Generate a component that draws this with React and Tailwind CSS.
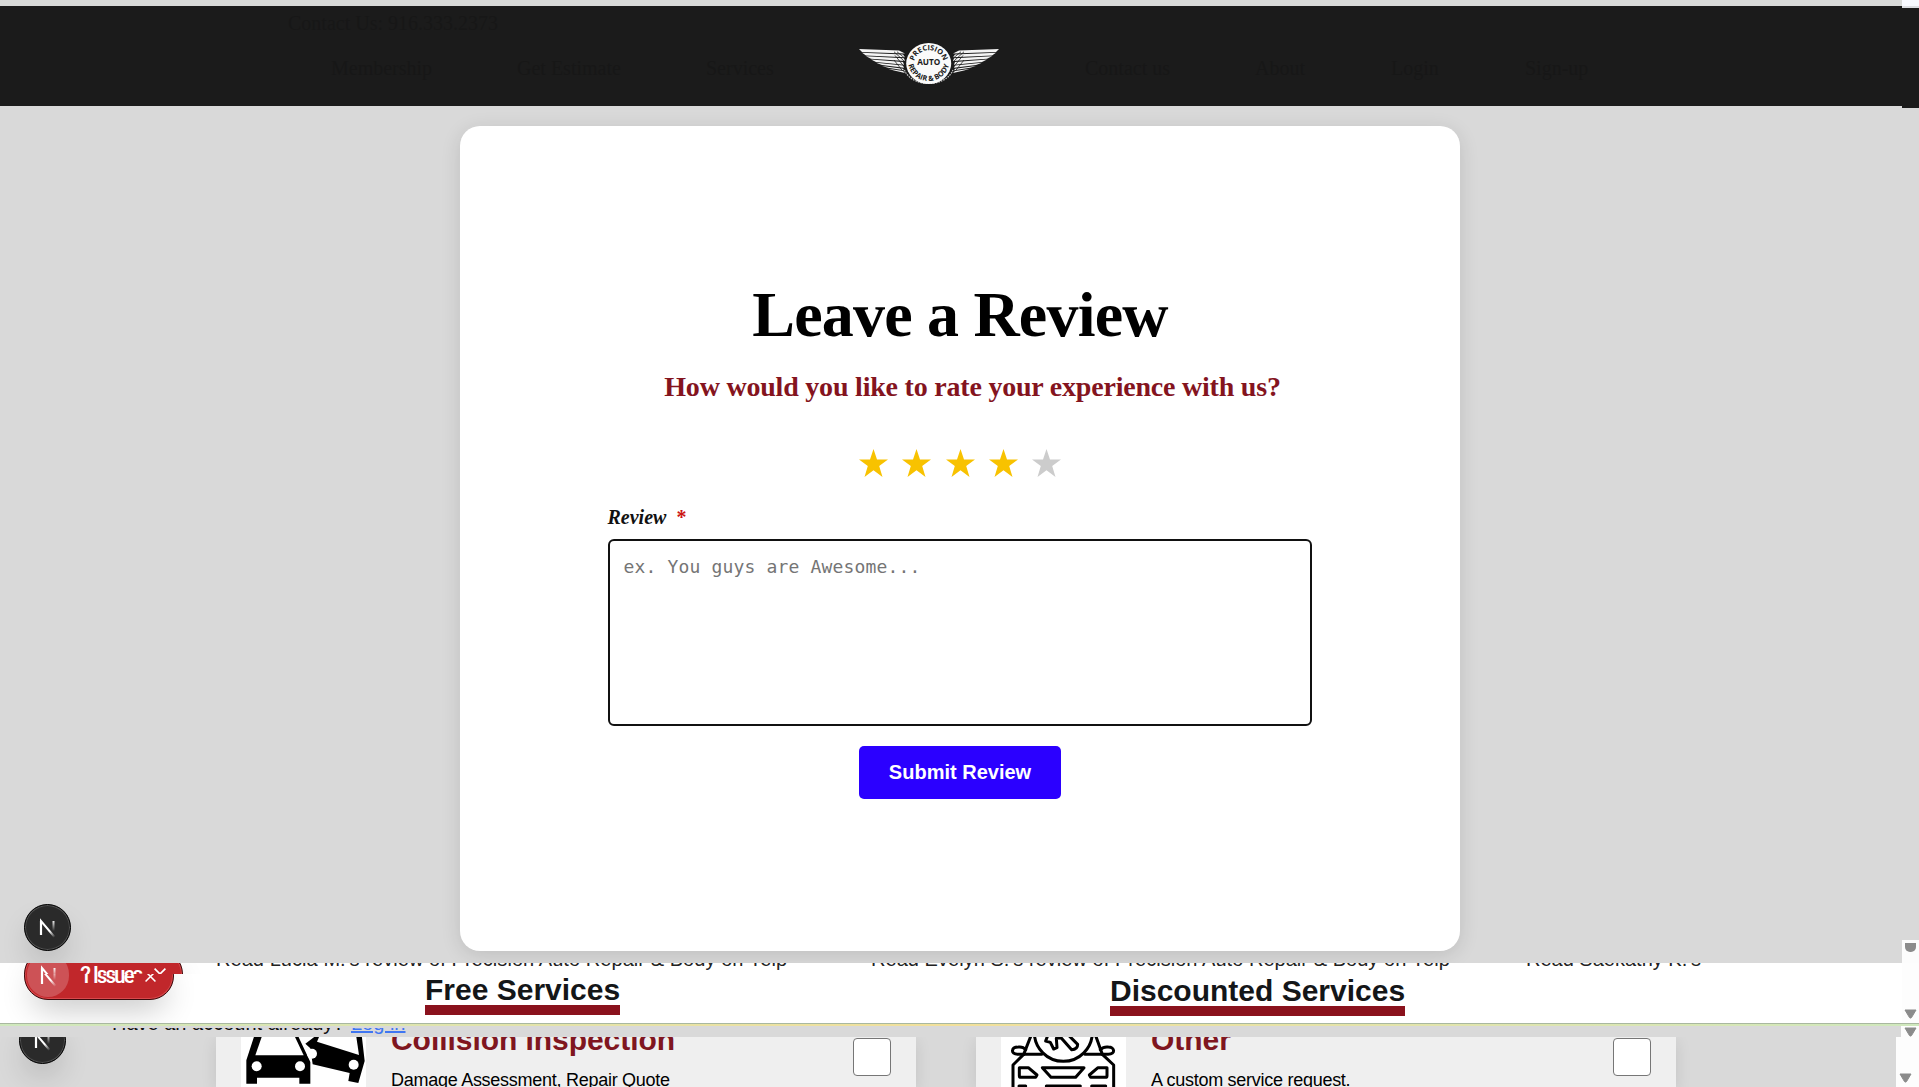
const leftNav = [
  { label: "Membership", cls: "ml-[331px] w-[186px]" },
  { label: "Get Estimate", cls: "w-[189px]" },
  { label: "Services", cls: "w-[153px]" },
];

const rightNav = [
  { label: "Contact us", cls: "ml-[86px] w-[170px]" },
  { label: "About", cls: "w-[136px]" },
  { label: "Login", cls: "w-[134px]" },
  { label: "Sign-up", cls: "w-[80px]" },
];

function Wing() {
  const feathers = [
    "M0 0 L40 1.500 L46 5 L3 3.200 Z",
    "M3 4 L44 6 L46 9 L7 7 Z",
    "M7 8 L45 10 L46 13 L12 10.500 Z",
    "M12 11.500 L44 14 L45 17 L17 14 Z",
    "M17 15 L44 18 L45 20.500 L23 17.500 Z",
    "M23 18.500 L44 21.500 L45 23 L29 20.500 Z",
    "M29 21.500 L44 23.800 L46 26 L35 23.500 Z",
  ];
  return (
    <g>
      {feathers.map((d) => (
        <path key={d} d={d} fill="#f4f4f4" />
      ))}
      <path d="M35 3L46 14M38 3L47 11M36 7L45 19M35 12L43 23" stroke="#1b1b1b" strokeWidth="0.8" />
    </g>
  );
}

function Logo() {
  return (
    <svg className="h-[46px] w-[140px] shrink-0" viewBox="0 0 140 46">
      <g transform="translate(0 7) scale(1 0.920)">
        <Wing />
      </g>
      <g transform="translate(140 7) scale(-1 0.920)">
        <Wing />
      </g>
      <ellipse cx="69.700" cy="22" rx="24.200" ry="21.500" fill="#1b1b1b" />
      <path d="M45.500 28a25 18 0 0 0 48.400 0" fill="none" stroke="#c4c4c4" strokeWidth="1.200" strokeDasharray="1.600 1" />
      <ellipse cx="69.700" cy="21.500" rx="22.500" ry="20.500" fill="#fafafa" />
      <defs>
        <path id="arcTop" d="M54.900 22a14.800 13.800 0 0 1 29.600 0" />
        <path id="arcBottom" d="M49 19a20.700 20 0 0 0 41.400 0" />
      </defs>
      <g className="font-['Open_Sans',sans-serif] font-bold" fill="#1b1b1b" textAnchor="middle">
        <text fontSize="7.300">
          <textPath href="#arcTop" startOffset="50%">PRECISION</textPath>
        </text>
        <text fontSize="7.300">
          <textPath href="#arcBottom" startOffset="50%">REPAIR &amp; BODY</textPath>
        </text>
        <text x="69.700" y="23.300" fontSize="8.200">AUTO</text>
      </g>
    </svg>
  );
}

function NextGlyph({ id }) {
  return (
    <svg className="h-[47px] w-[47px] shrink-0" viewBox="0 0 47 47" fill="none">
      <defs>
        <linearGradient id={`${id}d`} x1="24" y1="24" x2="31" y2="33" gradientUnits="userSpaceOnUse">
          <stop offset="0.300" stopColor="#fff" />
          <stop offset="1" stopColor="#fff" stopOpacity="0" />
        </linearGradient>
        <linearGradient id={`${id}v`} x1="0" y1="16" x2="0" y2="27" gradientUnits="userSpaceOnUse">
          <stop stopColor="#fff" />
          <stop offset="1" stopColor="#fff" stopOpacity="0" />
        </linearGradient>
      </defs>
      <path d="M17 31V17L30.500 33" stroke={`url(#${id}d)`} strokeWidth="2" />
      <path d="M17 31V17" stroke="#fff" strokeWidth="2.200" />
      <rect x="28.500" y="17" width="2" height="11" fill={`url(#${id}v)`} />
    </svg>
  );
}

function NextBadge({ id }) {
  return (
    <div className="h-[47px] w-[47px] rounded-full border border-black bg-[#2a2a2a] shadow-[inset_0_0_0_1px_#505050,0_16px_32px_-8px_rgba(0,0,0,0.24)]">
      <div className="-m-px">
        <NextGlyph id={id} />
      </div>
    </div>
  );
}

function IssuePill({ id, label, wide }) {
  return (
    <div
      className={
        "flex h-12 items-center rounded-full border border-[#3c0a0c] bg-[#c1272b] text-white shadow-[inset_0_0_0_1px_#d8494d,0_16px_32px_-8px_rgba(0,0,0,0.24)] " +
        (wide ? "w-[159px]" : "w-[150px]")
      }
    >
      <div className="ml-[2px] flex h-[42px] w-[42px] items-center justify-center rounded-full bg-[#cd5256]">
        <NextGlyph id={id} />
      </div>
      <span
        className={
          "ml-[11px] shrink-0 font-['Roboto',sans-serif] text-[20px] leading-none font-semibold tracking-[-1.700px] whitespace-pre " +
          (wide ? "w-[66px]" : "w-[54px]")
        }
      >
        {label}
      </span>
      <svg className={"shrink-0 " + (wide ? "ml-[8px] h-[12px] w-[12px]" : "ml-[11px] h-[11px] w-[11px]")} viewBox="0 0 10 10">
        <path d="M0.500 0.500L9.500 9.500M9.500 0.500L0.500 9.500" stroke="#fff" strokeWidth="1.400" />
      </svg>
    </div>
  );
}

function Arrow() {
  return (
    <svg className="h-[10px] w-[13px] shrink-0" viewBox="0 0 13 10">
      <path d="M1 1H12L7.500 8.600Q6.500 9.600 5.500 8.600Z" fill="#8b8b8b" stroke="#8b8b8b" strokeLinejoin="round" />
    </svg>
  );
}

function CarsIcon() {
  return (
    <svg className="h-[50px] w-[125px]" viewBox="0 0 375 150">
      <path d="M42 -10L16 70V140H48V122H175V140H208V75L168 -10Z" fill="#000" />
      <path d="M62 0L43 55H188L162 0Z" fill="#fff" />
      <circle cx="47" cy="88" r="15" fill="#fff" />
      <circle cx="177" cy="88" r="15" fill="#fff" />
      <path d="M225 -4L193 20L208 34L215 82L326 108L322 132L352 138L371 72L362 -6Z" fill="#000" />
      <path d="M234 0L228 14L354 54L346 0Z" fill="#fff" />
      <circle cx="213" cy="50" r="15" fill="#fff" />
      <circle cx="338" cy="83" r="15" fill="#fff" />
    </svg>
  );
}

function ServiceIcon() {
  return (
    <svg className="h-[50px] w-[125px]" viewBox="0 0 375 150" fill="none" stroke="#000" strokeWidth="9" strokeLinejoin="round" strokeLinecap="round">
      <path d="M90 -4L68 52M284 -4L304 52" />
      <path d="M68 52H50C28 52 30 30 52 30Q66 28 74 38M304 52H322C344 52 342 30 322 30Q308 28 298 38" />
      <path d="M68 52H122M252 52H304M68 52L36 84V150M304 52L338 84V150" />
      <circle cx="187" cy="-14" r="87" />
      <path d="M140 -4L134 12L148 16L158 36L168 32L166 4L180 2L212 38Q230 38 230 22L204 -4" />
      <path d="M55 92H82L108 114L104 121H60Q55 121 55 116ZM318 92H291L265 114L269 121H313Q318 121 318 116Z" />
      <path d="M124 92H249L224 121H150Z" />
      <path d="M54 147H74M136 147H238M272 147H314" />
    </svg>
  );
}

function ServiceCard({ title, text, icon }) {
  return (
    <div className="flex h-[50px] w-[700px] shrink-0 bg-[#efefef] shadow-[0_4px_16px_rgba(0,0,0,0.1)]">
      <div className="ml-[25px] h-[50px] w-[125px] shrink-0 bg-white">{icon}</div>
      <div className="ml-[25px] flex h-[50px] w-[462px] shrink-0 flex-col overflow-hidden font-['Liberation_Sans',sans-serif]">
        <h3 className="-mt-[12px] text-[30px] leading-[30px] font-bold tracking-[-0.05px] text-[#7f1620]">{title}</h3>
        <p className="mt-[15px] text-[18px] leading-5 tracking-[-0.270px] whitespace-nowrap text-black">{text}</p>
      </div>
      <div className="mt-[1px] h-[38px] w-[38px] shrink-0 rounded-[4px] border border-[#767676] bg-white" />
    </div>
  );
}

function Star({ on }) {
  return (
    <svg className="h-7 w-[29px]" viewBox="0 0 29 28">
      <path d="M14.500 0L18 10.500H29L20.200 17L23.500 28L14.500 21.300L5.500 28L8.800 17L0 10.500H11Z" fill={on ? "#f8c200" : "#cccccc"} />
    </svg>
  );
}

export default function App() {
  return (
    <div className="relative flex h-[1087px] w-[1919px] flex-col overflow-hidden bg-[#d9d9d9] font-['Liberation_Serif',serif]">
      <div className="flex h-[106px] shrink-0">
        <div className="w-[1902px]">
          <div className="h-[6px] bg-[#d8dad8]" />
          <header className="flex h-[100px] flex-col bg-[#1b1b1b] text-[#171717]">
            <p className="mt-[4px] ml-[288px] h-[24px] text-[20px] leading-[26px]">Contact Us: 916.333.2373</p>
            <div className="flex text-[20px] leading-[26px]">
              <nav className="mt-[21px] flex">
                {leftNav.map((n) => (
                  <a key={n.label} className={n.cls}>{n.label}</a>
                ))}
              </nav>
              <div className="mt-[8px]">
                <Logo />
              </div>
              <nav className="mt-[21px] flex">
                {rightNav.map((n) => (
                  <a key={n.label} className={n.cls}>{n.label}</a>
                ))}
              </nav>
            </div>
          </header>
        </div>
        <div className="h-[108px] w-[17px] bg-[#1b1b1b]">
          <div className="h-[6px] bg-[#f8faff]" />
          <div className="h-[2px] bg-[#dcdee2]" />
        </div>
      </div>

      <main className="relative flex h-[857px] shrink-0 justify-center overflow-hidden">
        <section className="mt-5 flex h-[825px] w-[1000px] flex-col items-center rounded-[20px] bg-white shadow-[0_4px_20px_rgba(0,0,0,0.12)]">
          <h1 className="mt-[157px] ml-px text-[64px] leading-[64px] font-bold tracking-[-0.800px] text-black">Leave a Review</h1>
          <h2 className="mt-[26px] ml-[26px] text-[28px] leading-7 font-bold tracking-[-0.210px] whitespace-nowrap text-[#84141e]">
            How would you like to rate your experience with us?
          </h2>
          <div className="mt-[48px] ml-px flex gap-[14.400px]">
            {[1, 2, 3, 4, 5].map((n) => (
              <Star key={n} on={n < 5} />
            ))}
          </div>
          <form className="flex w-[704px] flex-col items-center">
            <label className="mt-[30px] flex h-[24px] w-full text-[20px] leading-5 font-bold text-[#111]">
              <i>Review</i>
              <span className="ml-[10px] text-[#cc1414]">*</span>
            </label>
            <textarea
              className="mt-[8px] block h-[187px] w-full resize-none rounded-[6px] border-2 border-[#111] bg-white px-[14px] py-[14px] font-['DejaVu_Sans_Mono',monospace] text-[18px] leading-6 tracking-[0.160px] placeholder:text-[#757575]"
              placeholder="ex. You guys are Awesome..."
            />
            <button type="button" className="mt-5 h-[53px] w-[202px] rounded-[5px] bg-[#2b00ff] pb-[2px] pl-px font-['Liberation_Sans',sans-serif] text-[20px] font-bold text-white">
              Submit Review
            </button>
          </form>
        </section>
        <div className="absolute top-[798px] left-6">
          <NextBadge id="a" />
        </div>
        <div className="absolute right-0 bottom-0 h-[23px] w-[17px] bg-[#fcfcfc]">
          <div className="mt-[3px] ml-[3px] h-[9px] w-[11px] rounded-b-[5px] bg-[#8b8b8b]" />
        </div>
      </main>

      <section className="relative flex h-[60px] shrink-0 overflow-hidden bg-white font-['Liberation_Sans',sans-serif]">
        <div className="w-[1902px] shrink-0">
          <div className="flex h-[10px] overflow-hidden text-[20px] leading-5 whitespace-nowrap text-[#222]">
            <p className="-mt-[14px] ml-[216px] w-[655px] shrink-0 tracking-[0.060px]">Read Lucia M.'s review of Precision Auto Repair &amp; Body on Yelp</p>
            <p className="-mt-[14px] w-[655px] shrink-0 tracking-[0.040px]">Read Evelyn S.'s review of Precision Auto Repair &amp; Body on Yelp</p>
            <p className="-mt-[14px] shrink-0">Read Saekathy K.'s</p>
          </div>
          <div className="flex items-start text-[30px] leading-[30px] font-bold whitespace-nowrap text-[#141618]">
            <h2 className="mt-[2px] ml-[425px] w-[195px] border-b-10 border-[#8a121d]">Free Services</h2>
            <h2 className="mt-[3px] ml-[490px] w-[295px] border-b-10 border-[#8a121d]">Discounted Services</h2>
          </div>
        </div>
        <div className="flex w-[17px] items-end justify-center bg-[#fdfdfd] pb-[4px]">
          <Arrow />
        </div>
        <div className="absolute top-0 left-0 h-[11px] w-[260px] overflow-hidden">
          <div className="-mt-[13px] ml-6">
            <IssuePill id="b" label="2 Issues" wide />
          </div>
        </div>
        <div className="absolute top-[11px] left-0 h-[49px] w-[260px] overflow-hidden">
          <div className="-mt-[22px] ml-6">
            <IssuePill id="c" label="1 Issue" />
          </div>
        </div>
      </section>

      <div className="h-px shrink-0 bg-[#a9b8a0]" />
      <div className="h-[2px] shrink-0 bg-linear-to-r from-[#cfe8bd] via-[#f2e09a] to-[#cfe8bd]" />

      <section className="flex h-[11px] shrink-0 font-['Liberation_Sans',sans-serif] text-[20px] leading-5 whitespace-nowrap">
        <div className="mt-[2px] flex h-[9px] w-[1901px] overflow-hidden">
          <p className="-mt-[15px] ml-[112px] w-[239px] shrink-0 text-[#111]">Have an account already?</p>
          <a className="-mt-[15px] text-[#3f76f2] underline decoration-2 underline-offset-1">Log in</a>
        </div>
        <div className="flex w-[18px] items-end justify-center bg-[#fdfdfd]">
          <Arrow />
        </div>
      </section>

      <section className="relative flex h-[50px] shrink-0 overflow-hidden">
        <div className="flex w-[1896px] shrink-0 gap-[60px] pl-[216px]">
          <ServiceCard title="Collision Inspection" text="Damage Assessment, Repair Quote" icon={<CarsIcon />} />
          <ServiceCard title="Other" text="A custom service request." icon={<ServiceIcon />} />
        </div>
        <div className="flex w-[23px] items-end bg-[#fdfdfd] pb-[4px] pl-[3px]">
          <Arrow />
        </div>
        <div className="absolute -top-5 left-[19px]">
          <NextBadge id="d" />
        </div>
      </section>
    </div>
  );
}
